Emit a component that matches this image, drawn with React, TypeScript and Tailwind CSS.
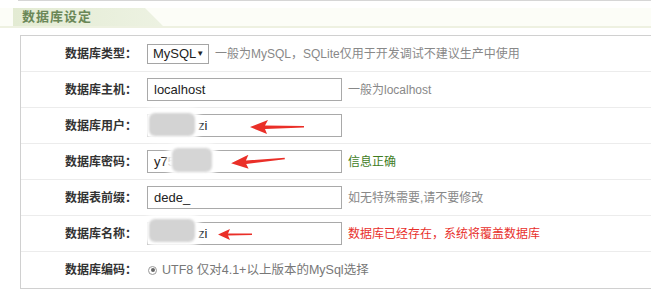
const rows = [
  { label: '数据库类型：', kind: 'select', help: '一般为MySQL，SQLite仅用于开发调试不建议生产中使用', tone: 'gray' },
  { label: '数据库主机：', kind: 'input', value: 'localhost', help: '一般为localhost', tone: 'gray' },
  { label: '数据库用户：', kind: 'masked', value: 'zi', help: '', tone: 'gray' },
  { label: '数据库密码：', kind: 'input', value: 'y75', help: '信息正确', tone: 'green' },
  { label: '数据表前缀：', kind: 'input', value: 'dede_', help: '如无特殊需要,请不要修改', tone: 'gray' },
  { label: '数据库名称：', kind: 'masked', value: 'zi', help: '数据库已经存在，系统将覆盖数据库', tone: 'red' },
  { label: '数据库编码：', kind: 'radio', help: '', tone: 'gray' },
]

const toneClass: Record<string, string> = {
  gray: 'text-[#888]',
  green: 'text-[#3f7d1f]',
  red: 'text-[#e8302c]',
}

function Field({ row }: { row: (typeof rows)[number] }) {
  if (row.kind === 'select') {
    return (
      <div className="flex h-[20px] w-[62px] items-center justify-between border border-[#a5a5a5] bg-white pl-[5px] pr-[4px] text-[13px] text-[#222]">
        <span>MySQL</span>
        <span className="text-[8px]">▼</span>
      </div>
    )
  }
  if (row.kind === 'radio') {
    return (
      <div className="flex items-center text-[12.5px] text-[#777]">
        <span className="ml-[1px] mr-[5px] flex h-[9px] w-[9px] items-center justify-center rounded-full border border-[#999] bg-white">
          <span className="h-[4px] w-[4px] rounded-full bg-[#666]" />
        </span>
        <span>UTF8 仅对4.1+以上版本的MySql选择</span>
      </div>
    )
  }
  return (
    <div className="flex h-[23px] w-[195px] items-center border border-[#a9a9a9] bg-white pl-[6px] text-[13px] text-[#222]">
      {row.kind === 'masked' && <span className="inline-block w-[44px]" />}
      <span>{row.value}</span>
    </div>
  )
}

function Arrow({ className, rotate = 0 }: { className: string; rotate?: number }) {
  return (
    <svg
      className={`absolute ${className}`}
      width="54"
      height="14"
      viewBox="0 0 54 14"
      style={{ transform: `rotate(${rotate}deg)` }}
    >
      <polygon points="0,7 18,0 15,5.5 54,6 54,7.5 15,9 17,14" fill="#ea2f28" />
    </svg>
  )
}

export default function App() {
  return (
    <div
      className="relative h-[289px] w-[651px] overflow-hidden bg-white"
      style={{ fontFamily: '"Liberation Sans", "Noto Sans CJK SC", sans-serif' }}
    >
      <div className="ml-[18px] h-[2px] border-t border-[#d6d6d6]" />
      <div className="mt-[6px] flex h-[20px] border-b-2 border-[#eef1e1] bg-[#fcfdf7]">
        <div className="ml-[13px] flex w-[150px] items-center bg-[linear-gradient(to_right,#e3ebd3,#edf2e2)] pl-[9px] [clip-path:polygon(0_0,88%_0,100%_100%,0_100%)]">
          <span className="text-[13px] font-bold tracking-[1px] text-[#6a8757]">数据库设定</span>
        </div>
      </div>

      <div className="ml-[20px] mt-[7px] w-[700px] border-b-2 border-l border-t border-[#d0d0d0]">
        {rows.map((row, i) => (
          <div
            key={row.label}
            className={`flex h-[36px] items-center ${i < rows.length - 1 ? 'border-b border-[#ececec]' : ''}`}
          >
            <div className="w-[126px] pr-[10px] text-right text-[12px] font-bold text-[#333]">{row.label}</div>
            <Field row={row} />
            {row.help && (
              <span className={`ml-[6px] text-[12px] ${toneClass[row.tone]}`}>{row.help}</span>
            )}
          </div>
        ))}
      </div>

      {/* masking blurs */}
      <div className="absolute left-[149px] top-[113px] h-[23px] w-[46px] rounded-[6px] bg-[#d3d3d3] shadow-[0_0_4px_5px_white] blur-[1px]" />
      <div className="absolute left-[172px] top-[148px] h-[24px] w-[40px] rounded-[6px] bg-[#d5d5d5] shadow-[0_0_4px_5px_white] blur-[1px]" />
      <div className="absolute left-[149px] top-[219px] h-[23px] w-[46px] rounded-[6px] bg-[#d3d3d3] shadow-[0_0_4px_5px_white] blur-[1px]" />

      <Arrow className="left-[250px] top-[120px]" />
      <Arrow className="left-[231px] top-[154px]" rotate={-5} />
      <svg className="absolute left-[218px] top-[229px]" width="34" height="11" viewBox="0 0 34 11">
        <polygon points="0,5.5 12,0 10,4.5 34,4.5 34,6 10,6.5 12,11" fill="#ea2f28" />
      </svg>
    </div>
  )
}
